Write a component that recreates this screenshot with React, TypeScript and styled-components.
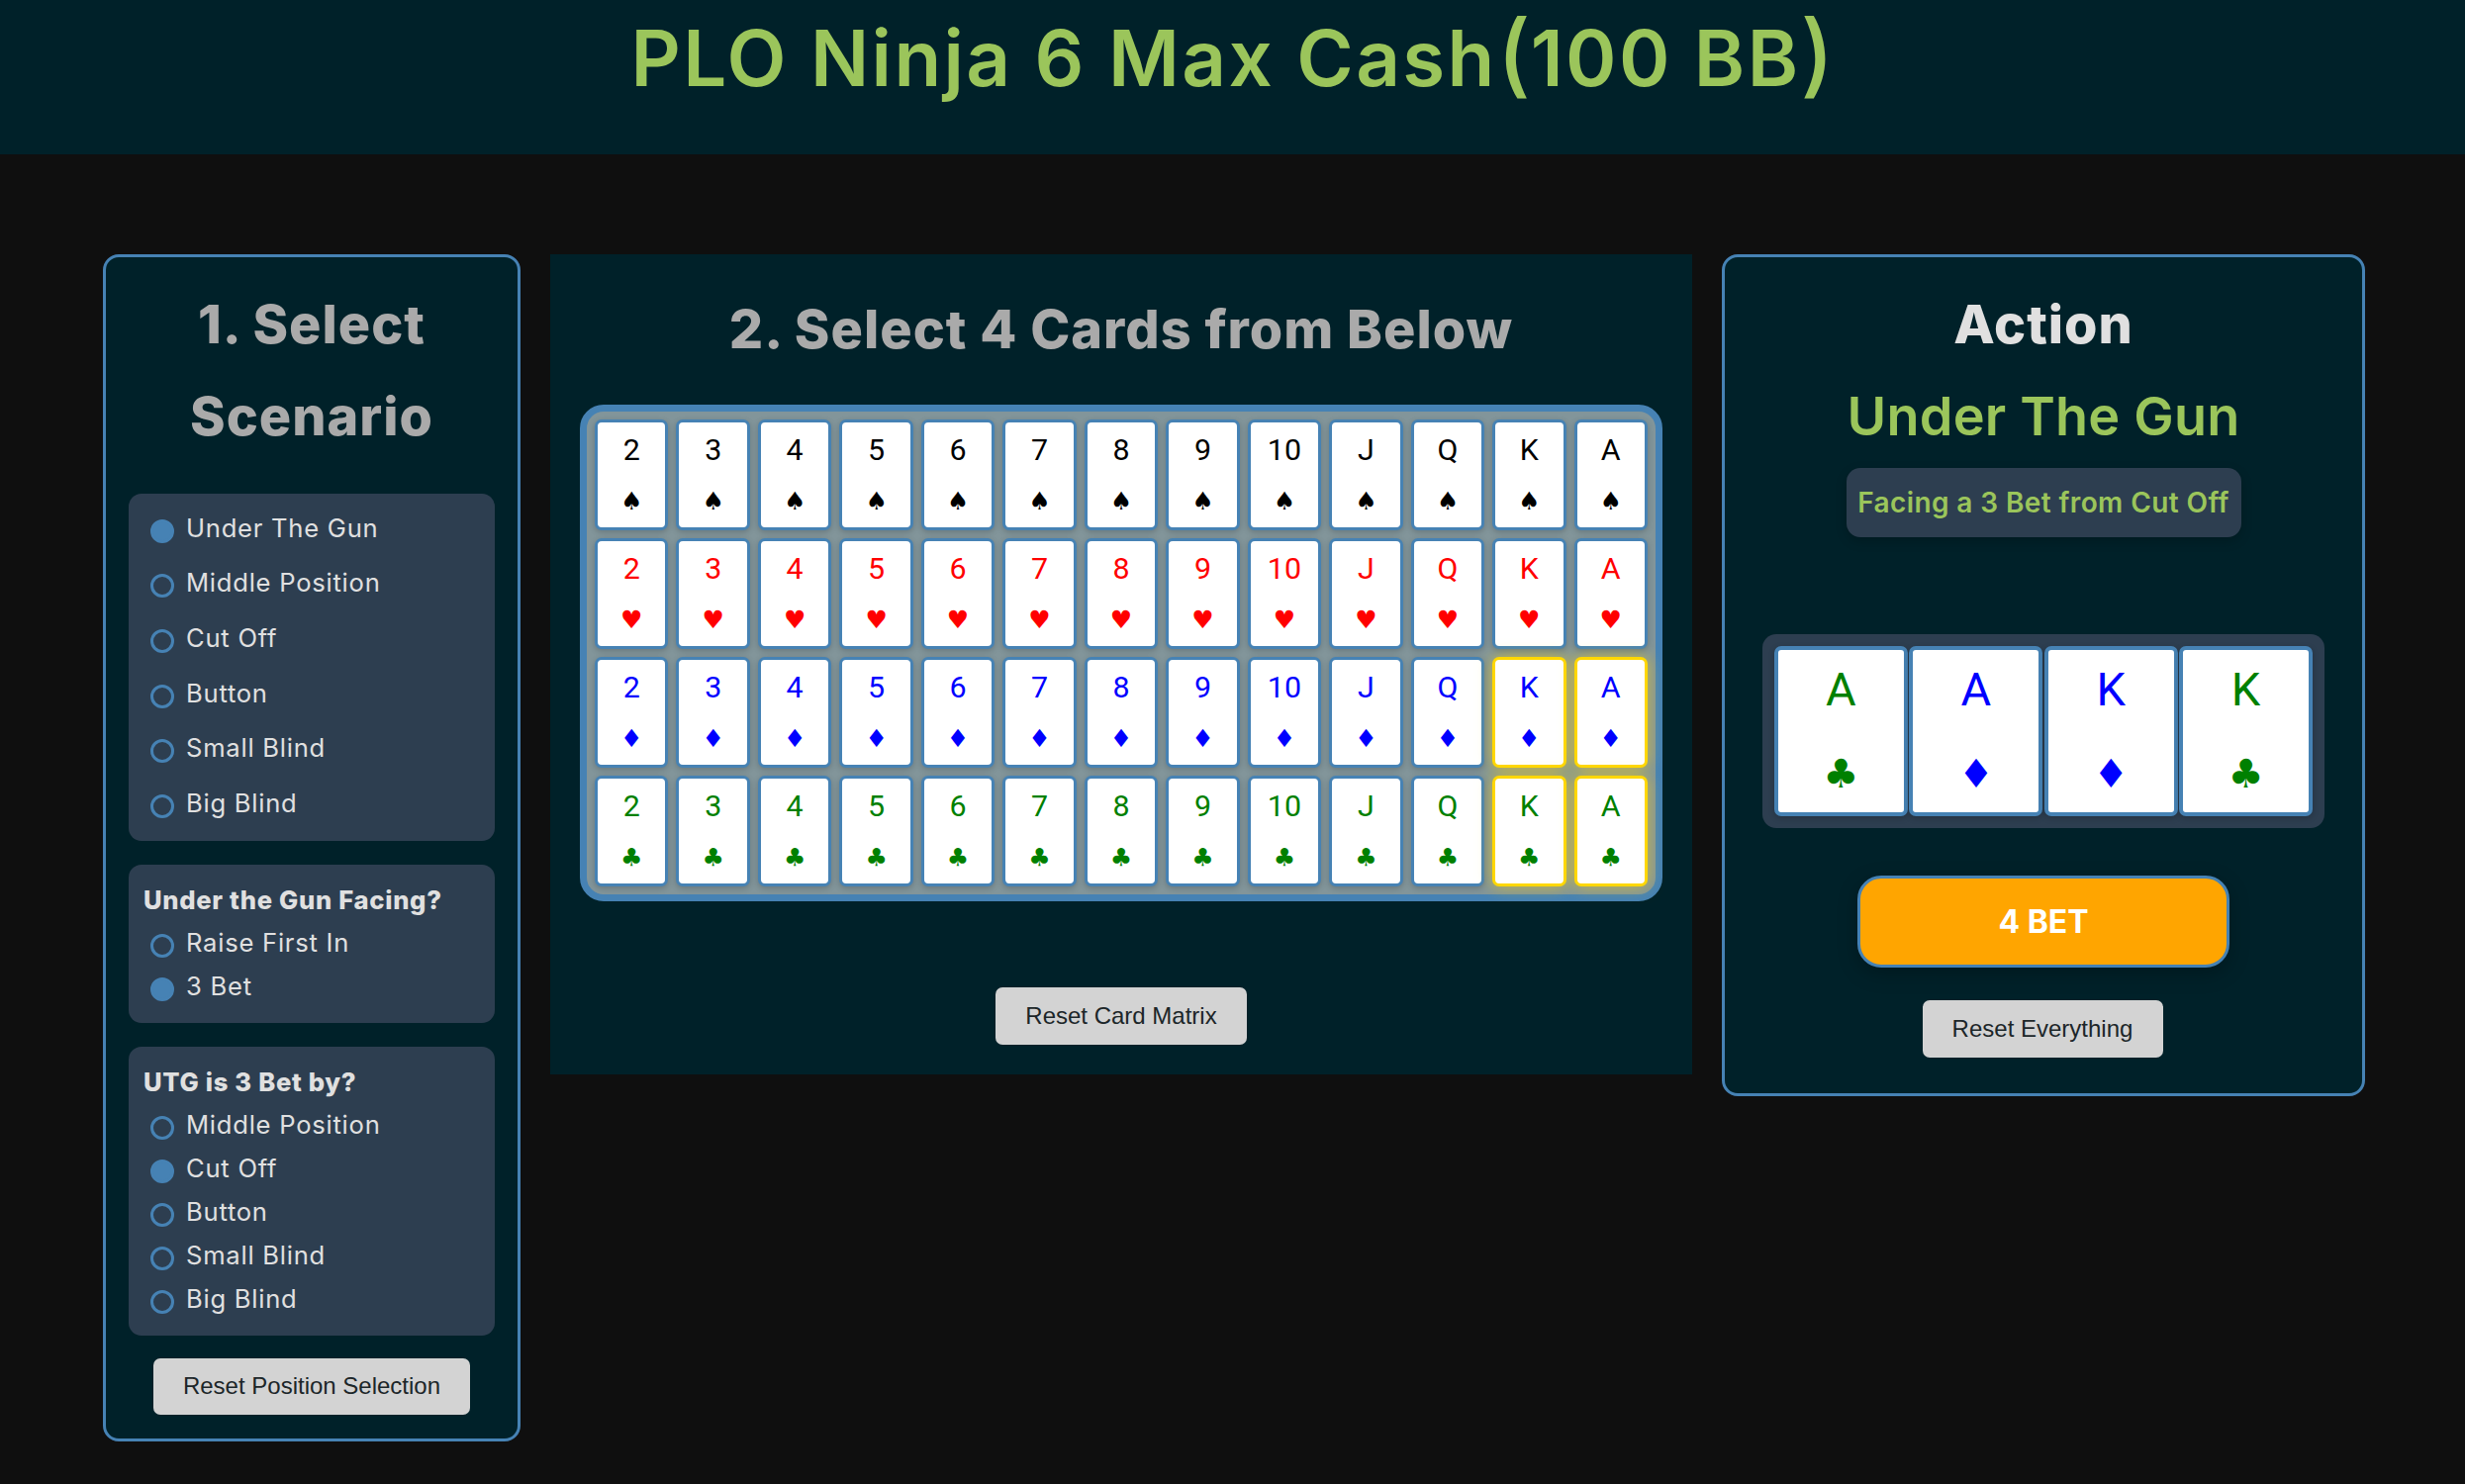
import React from 'react';
import styled, { createGlobalStyle, css } from 'styled-components';

const GlobalStyle = createGlobalStyle`
  html, body {
    margin: 0;
    padding: 0;
    background: #0f0f0f;
    min-height: 100%;
  }
  * {
    box-sizing: border-box;
  }
`;

const sans = `Inter, "Noto Sans", "Liberation Sans", sans-serif`;
const steel = '#4682b4';
const slate = '#2d3e50';
const panelBg = '#002129';
const green = '#9bc55b';

const Page = styled.div`
  min-height: 1500px;
  background: #0f0f0f;
  font-family: ${sans};
`;

const Header = styled.header`
  height: 156px;
  background: ${panelBg};
  text-align: center;
`;

const Title = styled.h1`
  margin: 0;
  padding-top: 14px;
  font-size: 78px;
  line-height: 90px;
  font-weight: 600;
  color: ${green};
  letter-spacing: 2.4px;
`;

const Paren = styled.span`
  font-size: 92px;
  line-height: 0;
  font-weight: 500;
  letter-spacing: 0;
`;

const Main = styled.main`
  display: flex;
  align-items: flex-start;
  gap: 30px;
  padding: 101px 0 0 104px;
`;

const Panel = styled.section<{ $width: number; $framed?: boolean }>`
  width: ${(p) => p.$width}px;
  background: ${panelBg};
  ${(p) =>
    p.$framed &&
    css`
      border: 3px solid ${steel};
      border-radius: 16px;
    `}
`;

const ScenarioPanel = styled(Panel)`
  padding: 21px 23px 24px;
  display: flex;
  flex-direction: column;
  align-items: stretch;
`;

const Heading = styled.h2<{ $light?: boolean }>`
  margin: 0;
  font-size: 54px;
  line-height: 93px;
  font-weight: 800;
  letter-spacing: 1px;
  text-align: center;
  color: ${(p) => (p.$light ? '#e0e0e0' : '#aaaaaa')};
`;

const Group = styled.div<{ $compact?: boolean }>`
  background: ${slate};
  border-radius: 13px;
  padding: ${(p) => (p.$compact ? '16px 15px 14px' : '8px 15px 9px')};
  margin-top: 24px;

  &:first-of-type {
    margin-top: 32px;
  }
`;

const GroupTitle = styled.div`
  font-size: 25.6px;
  line-height: 40px;
  font-weight: 800;
  letter-spacing: 0.7px;
  color: #e0e0e0;
  margin-bottom: 2px;
`;

const Option = styled.label<{ $compact?: boolean }>`
  display: flex;
  align-items: center;
  gap: 12px;
  height: ${(p) => (p.$compact ? '44px' : '55.6px')};
  padding: 0 0 3px 7px;
  font-size: 25.6px;
  letter-spacing: 0.75px;
  color: #e0e0e0;
`;

const Radio = styled.input`
  appearance: none;
  width: 24px;
  height: 24px;
  margin: 7px 0 0;
  flex: none;
  border: 3px solid ${steel};
  border-radius: 50%;
  background: transparent;

  &:checked {
    background: ${steel};
  }
`;

const GreyButton = styled.button<{ $w: number; $h?: number }>`
  display: block;
  width: ${(p) => p.$w}px;
  height: ${(p) => p.$h ?? 58}px;
  margin: 0 auto;
  padding: 0;
  border: none;
  border-radius: 7px;
  background: #d3d3d3;
  color: #1c2629;
  font-family: 'Liberation Sans', Arial, sans-serif;
  font-size: 24px;
`;

const ScenarioReset = styled(GreyButton)`
  margin-top: 23px;
`;

const MatrixPanel = styled(Panel)`
  padding: 29px 30px 30px;
`;

const Matrix = styled.div`
  display: grid;
  grid-template-columns: repeat(13, 1fr);
  gap: 8px;
  margin-top: 30px;
  padding: 8px;
  border: 7px solid ${steel};
  border-radius: 24px;
  background: #82959a;
`;

const Card = styled.div<{ $color: string; $selected?: boolean; $big?: boolean }>`
  display: flex;
  flex-direction: column;
  align-items: center;
  height: ${(p) => (p.$big ? 172 : 112)}px;
  background: #fff;
  color: ${(p) => p.$color};
  border: ${(p) => (p.$big ? 4 : 3.5)}px solid ${steel};
  border-radius: 7px;
  box-shadow: 0 2px 6px rgba(0, 0, 0, 0.2);
  ${(p) =>
    p.$selected &&
    css`
      position: relative;
      z-index: 1;
      border-width: 3px;
      border-color: #ffd700;
      box-shadow: 0 0 16px rgba(255, 215, 0, 0.6);
    `}
`;

const Rank = styled.span<{ $big?: boolean }>`
  font-family: Roboto, ${sans};
  font-size: ${(p) => (p.$big ? 47 : 30.4)}px;
  line-height: ${(p) => (p.$big ? 60 : 38)}px;
  margin-top: ${(p) => (p.$big ? 10 : 9)}px;
`;

const Suit = styled.span<{ $big?: boolean }>`
  font-family: 'DejaVu Sans', sans-serif;
  font-size: ${(p) => (p.$big ? 40 : 25)}px;
  line-height: ${(p) => (p.$big ? 44 : 28)}px;
  margin-top: ${(p) => (p.$big ? 33 : 19)}px;
`;

const MatrixReset = styled(GreyButton)`
  margin-top: 87px;
`;

const ActionPanel = styled(Panel)`
  padding: 21px 0 36px;
  display: flex;
  flex-direction: column;
  align-items: center;
`;

const Position = styled.div`
  font-size: 54px;
  line-height: 93px;
  font-weight: 600;
  letter-spacing: 0.2px;
  color: ${green};
`;

const Chip = styled.div`
  width: 399px;
  height: 70px;
  margin-top: 6px;
  display: flex;
  align-items: center;
  justify-content: center;
  background: ${slate};
  border-radius: 14px;
  box-shadow: 0 4px 12px rgba(0, 0, 0, 0.2);
  color: ${green};
  font-size: 28px;
  font-weight: 600;
  letter-spacing: 0.4px;
`;

const Hand = styled.div`
  display: grid;
  grid-template-columns: repeat(4, 1fr);
  gap: 1.5px;
  width: 568px;
  margin-top: 98px;
  padding: 12px;
  background: ${slate};
  border-radius: 14px;
`;

const BetButton = styled.button`
  display: block;
  width: 376px;
  height: 93px;
  margin-top: 48px;
  border: 3px solid ${steel};
  border-radius: 24px;
  background: #ffa500;
  box-shadow: 0 6px 20px rgba(0, 0, 0, 0.25);
  color: #fff;
  font-family: ${sans};
  font-size: 32px;
  font-weight: 700;
`;

const ActionReset = styled(GreyButton)`
  margin: 33px 2px 0 0;
`;

const RANKS = ['2', '3', '4', '5', '6', '7', '8', '9', '10', 'J', 'Q', 'K', 'A'];

const SUITS = [
  { key: 's', glyph: '♠', color: '#000000' },
  { key: 'h', glyph: '♥', color: '#ff0000' },
  { key: 'd', glyph: '♦', color: '#0000ff' },
  { key: 'c', glyph: '♣', color: '#008000' },
];

const SELECTED = ['Kd', 'Ad', 'Kc', 'Ac'];

const HAND = [
  { rank: 'A', suit: SUITS[3] },
  { rank: 'A', suit: SUITS[2] },
  { rank: 'K', suit: SUITS[2] },
  { rank: 'K', suit: SUITS[3] },
];

function RadioList({ name, items, checked, compact }: { name: string; items: string[]; checked: string; compact?: boolean }) {
  return (
    <>
      {items.map((item) => (
        <Option key={item} $compact={compact}>
          <Radio type="radio" name={name} defaultChecked={item === checked} />
          {item}
        </Option>
      ))}
    </>
  );
}

function App() {
  return (
    <Page>
      <GlobalStyle />
      <Header>
        <Title>
          PLO Ninja 6 Max Cash<Paren>(</Paren>100 BB<Paren>)</Paren>
        </Title>
      </Header>
      <Main>
        <ScenarioPanel $width={422} $framed>
          <Heading>
            1. Select
            <br />
            Scenario
          </Heading>
          <Group>
            <RadioList
              name="position"
              checked="Under The Gun"
              items={['Under The Gun', 'Middle Position', 'Cut Off', 'Button', 'Small Blind', 'Big Blind']}
            />
          </Group>
          <Group $compact>
            <GroupTitle>Under the Gun Facing?</GroupTitle>
            <RadioList name="facing" checked="3 Bet" compact items={['Raise First In', '3 Bet']} />
          </Group>
          <Group $compact>
            <GroupTitle>UTG is 3 Bet by?</GroupTitle>
            <RadioList
              name="by"
              checked="Cut Off"
              compact
              items={['Middle Position', 'Cut Off', 'Button', 'Small Blind', 'Big Blind']}
            />
          </Group>
          <ScenarioReset $w={320} $h={57}>
            Reset Position Selection
          </ScenarioReset>
        </ScenarioPanel>

        <MatrixPanel $width={1154}>
          <Heading>2. Select 4 Cards from Below</Heading>
          <Matrix>
            {SUITS.map((suit) =>
              RANKS.map((rank) => (
                <Card key={rank + suit.key} $color={suit.color} $selected={SELECTED.includes(rank + suit.key)}>
                  <Rank>{rank}</Rank>
                  <Suit>{suit.glyph}</Suit>
                </Card>
              )),
            )}
          </Matrix>
          <MatrixReset $w={254}>Reset Card Matrix</MatrixReset>
        </MatrixPanel>

        <ActionPanel $width={650} $framed>
          <Heading $light>Action</Heading>
          <Position>Under The Gun</Position>
          <Chip>Facing a 3 Bet from Cut Off</Chip>
          <Hand>
            {HAND.map((card) => (
              <Card key={card.rank + card.suit.key} $big $color={card.suit.color}>
                <Rank $big>{card.rank}</Rank>
                <Suit $big>{card.suit.glyph}</Suit>
              </Card>
            ))}
          </Hand>
          <BetButton>4 BET</BetButton>
          <ActionReset $w={243}>Reset Everything</ActionReset>
        </ActionPanel>
      </Main>
    </Page>
  );
}

export default App;
